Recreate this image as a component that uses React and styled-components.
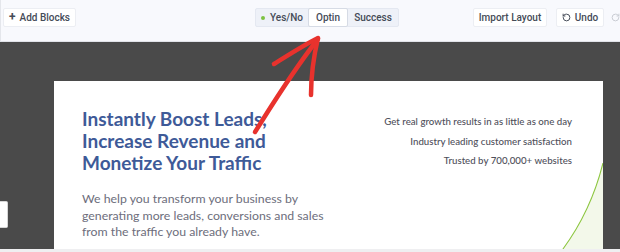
import React from 'react';
import styled, { createGlobalStyle } from 'styled-components';
import { RotateCcw, RotateCw } from 'lucide-react';

const Global = createGlobalStyle`
  html, body { margin: 0; padding: 0; background: #fff; }
  * { box-sizing: border-box; }
`;

const benefits = [
  'Get real growth results in as little as one day',
  'Industry leading customer satisfaction',
  'Trusted by 700,000+ websites',
];

const App = () => (
  <Page>
    <Global />
    <Toolbar>
      <ToolButton w={73}>
        <Plus>+</Plus>
        Add Blocks
      </ToolButton>
      <Segments>
        <Segment w={52}>
          <Dot />
          Yes/No
        </Segment>
        <Segment w={40} active>Optin</Segment>
        <Segment w={50}>Success</Segment>
      </Segments>
      <RightTools>
        <ToolButton w={74}>Import Layout</ToolButton>
        <ToolButton w={48}>
          <RotateCcw size={9} strokeWidth={2.6} />
          Undo
        </ToolButton>
        <Redo>
          <RotateCw size={9} strokeWidth={2.6} />
        </Redo>
      </RightTools>
    </Toolbar>

    <Canvas>
      <SideTab />
      <Card>
        <Intro>
          <Heading>
            Instantly Boost Leads,
            <br />
            Increase Revenue and
            <br />
            Monetize Your Traffic
          </Heading>
          <Lead>
            We help you transform your business by
            <br />
            generating more leads, conversions and sales
            <br />
            from the traffic you already have.
          </Lead>
        </Intro>
        <Benefits>
          {benefits.map((b) => (
            <li key={b}>{b}</li>
          ))}
        </Benefits>
        <Curve viewBox="0 0 60 200" preserveAspectRatio="none">
          <path d="M0 200 C 24 150, 46 90, 60 0 L 60 200 Z" fill="#f3f8ea" />
          <path d="M0 200 C 24 150, 46 90, 60 0" fill="none" stroke="#8cc63f" strokeWidth="1.6" />
        </Curve>
      </Card>
    </Canvas>
    <BottomStrip />

    <Arrow viewBox="0 0 620 252">
      <path
        d="M255 132 C 272 105, 292 72, 318 39"
        fill="none"
        stroke="#e8322d"
        strokeWidth="4.5"
        strokeLinecap="round"
      />
      <path
        d="M274 64 C 290 54, 304 45, 318 38 C 314 55, 311 75, 311 95"
        fill="none"
        stroke="#e8322d"
        strokeWidth="4.5"
        strokeLinecap="round"
        strokeLinejoin="round"
      />
    </Arrow>
  </Page>
);

export default App;

// Styled Components

const Page = styled.div`
  position: relative;
  width: 620px;
  height: 252px;
  overflow: hidden;
  display: flex;
  flex-direction: column;
  font-family: 'Roboto', 'Liberation Sans', sans-serif;
`;

const Toolbar = styled.div`
  height: 42px;
  flex: none;
  display: flex;
  align-items: flex-start;
  padding: 8px 0 0 2px;
  background: #f8f9fd;
  border-bottom: 1px solid #e1e3e9;
  border-left: 1px solid #e4e6eb;
`;

const ToolButton = styled.div`
  width: ${(p) => p.w}px;
  height: 19px;
  flex: none;
  display: flex;
  align-items: center;
  justify-content: center;
  gap: 4px;
  background: #fff;
  border: 1px solid #eceef3;
  border-radius: 2px;
  font-size: 10px;
  font-weight: 500;
  color: #454b57;
  white-space: nowrap;
`;

const Plus = styled.span`
  font-size: 12px;
  font-weight: 700;
  line-height: 1;
  margin-top: -1px;
`;

const Segments = styled.div`
  display: flex;
  height: 19px;
  margin-left: 179px;
  background: #eef1f8;
  border: 1px solid #e4e8f1;
  border-radius: 2px;
`;

const Segment = styled.div`
  width: ${(p) => p.w}px;
  display: flex;
  align-items: center;
  justify-content: center;
  gap: 5px;
  margin: -1px 0;
  font-size: 10px;
  font-weight: 500;
  color: #454b57;
  background: ${(p) => (p.active ? '#fff' : 'transparent')};
  border: 1px solid ${(p) => (p.active ? '#d6dbe5' : 'transparent')};
  border-radius: 2px;
`;

const Dot = styled.span`
  width: 4px;
  height: 4px;
  border-radius: 50%;
  background: #7cc242;
`;

const RightTools = styled.div`
  display: flex;
  align-items: center;
  gap: 9px;
  margin-left: 74px;
`;

const Redo = styled.span`
  display: flex;
  height: 19px;
  align-items: center;
  color: #c9ccd3;
  margin-left: -2px;
`;

const Canvas = styled.div`
  position: relative;
  flex: none;
  height: 207px;
  overflow: hidden;
  background: #4a4a4a;
  padding: 39px 17px 0 54px;
`;

const SideTab = styled.div`
  position: absolute;
  left: 0;
  top: 159px;
  width: 8px;
  height: 27px;
  background: #fff;
  border: 1px solid #d6d6d6;
  border-left: none;
  border-radius: 0 2px 2px 0;
`;

const Card = styled.div`
  position: relative;
  height: 260px;
  background: #fff;
  display: flex;
  justify-content: space-between;
  padding: 27px 31px 0 28px;
  font-family: 'Lato', 'Liberation Sans', sans-serif;
`;

const Intro = styled.div`
  display: flex;
  flex-direction: column;
  gap: 17px;
`;

const Heading = styled.h1`
  margin: 0;
  font-size: 19px;
  line-height: 22px;
  font-weight: 700;
  color: #3e5a98;
`;

const Lead = styled.p`
  margin: 0;
  font-size: 12.3px;
  line-height: 16.5px;
  color: #6d6e7c;
`;

const Benefits = styled.ul`
  list-style: none;
  margin: 4px 0 0;
  padding: 0;
  text-align: right;
  font-size: 9.7px;
  line-height: 19.5px;
  font-weight: 500;
  color: #4f505b;
`;

const Curve = styled.svg`
  position: absolute;
  right: 0;
  top: 82px;
  width: 43px;
  height: 90px;
`;

const BottomStrip = styled.div`
  flex: 1;
  background: #efeff1;
`;

const Arrow = styled.svg`
  position: absolute;
  inset: 0;
  width: 620px;
  height: 252px;
  pointer-events: none;
`;
